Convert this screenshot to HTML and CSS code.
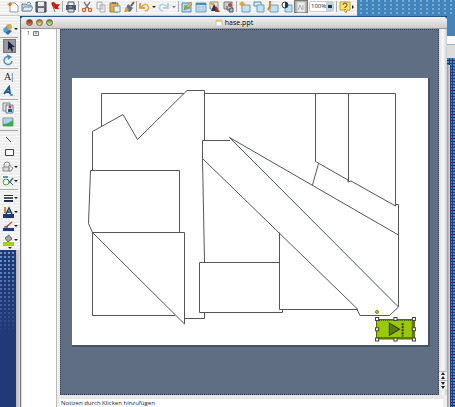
FILE: index.html
```
<!DOCTYPE html>
<html lang="de">
<head>
<meta charset="utf-8">
<title>hase.ppt</title>
<link rel="stylesheet" href="styles.css">
</head>
<body>
<header class="top">
  <div class="toolbar" role="toolbar" aria-label="Standard">
    <button class="tool" aria-label="Neu"><svg viewBox="0 0 12 12"><path d="M3 2h5l3 3v6H3z" fill="#fff" stroke="#9a9a9a"/><path d="M0 3l5-1-1 3-2 0z" fill="#f09a20"/><circle cx="3" cy="3" r="1.5" fill="#d87812"/></svg></button>
    <button class="tool" aria-label="Öffnen"><svg viewBox="0 0 12 12"><path d="M1 3h4l1 1h4v6H1z" fill="#b8cedb" stroke="#748894"/><path d="M3 6h9l-2 4H1z" fill="#e4f0f6" stroke="#7b929e"/><path d="M6 2q3-2 4 1" fill="none" stroke="#4586bb"/></svg></button>
    <button class="tool" aria-label="Sichern"><svg viewBox="0 0 12 12"><path d="M1 1h10v10H1z" fill="#66717b" stroke="#333c48"/><path d="M3 1h6v4H3z" fill="#e9eef2"/><path d="M3 7h6v4H3z" fill="#d9e0e8"/><path d="M2 6h8" stroke="#c24136"/></svg></button>
    <button class="tool" aria-label="Markieren"><svg viewBox="0 0 12 12"><path d="M3 3l3 8" stroke="#866"/><path d="M2 2q3-2 4 0t5 1L9 6l1 2q-3 1-5-1z" fill="#c91f18"/></svg></button>
    <span class="sep"></span>
    <button class="tool" aria-label="Drucken"><svg viewBox="0 0 12 12"><path d="M3 1h6v4H3z" fill="#e8f0f7" stroke="#555"/><path d="M1 4h10v5H1z" fill="#4d5966"/><path d="M3 8h6v3H3z" fill="#dbe9f5" stroke="#556"/><path d="M4 6h3" stroke="#72b9e8"/></svg></button>
    <span class="sep"></span>
    <button class="tool" aria-label="Ausschneiden"><svg viewBox="0 0 12 12"><path d="M3 1l5 7M9 1L4 8" stroke="#777" stroke-width="1.3"/><circle cx="3" cy="9" r="1.6" fill="none" stroke="#d0652e" stroke-width="1.3"/><circle cx="9" cy="9" r="1.6" fill="none" stroke="#d0652e" stroke-width="1.3"/></svg></button>
    <button class="tool" aria-label="Kopieren"><svg viewBox="0 0 12 12"><path d="M2 1h5v7H2zM5 4h5v7H5z" fill="#f6f6f6" stroke="#aaa"/><path d="M6 6h3M6 8h3" stroke="#ccc"/></svg></button>
    <button class="tool" aria-label="Einsetzen"><svg viewBox="0 0 12 12"><path d="M1 2h8v9H1z" fill="#e8a84a" stroke="#a97436"/><path d="M3 1h4v2H3z" fill="#777"/><path d="M5 5h6v6H5z" fill="#e9f2e4" stroke="#7b9a87"/></svg></button>
    <button class="tool" aria-label="Format übertragen"><svg viewBox="0 0 12 12"><path d="M11 1L8 5" stroke="#7e5534" stroke-width="2"/><path d="M5 3l5 4-3 4-5-2z" fill="#5b7488"/><path d="M1 11l2-5 3 2-2 3z" fill="#d9a040"/></svg></button>
    <span class="sep"></span>
    <button class="tool wide" aria-label="Widerrufen"><svg viewBox="0 0 12 12"><path d="M2 2v5h5" fill="none" stroke="#dd8b20" stroke-width="1.600"/><path d="M3 6q5-5 7-1t-3 5" fill="none" stroke="#e9a93c" stroke-width="1.600"/></svg><i class="down"></i></button>
    <button class="tool wide faint" aria-label="Wiederholen"><svg viewBox="0 0 12 12"><path d="M10 2v5H5" fill="none" stroke="#77aecb" stroke-width="1.600"/><path d="M9 6Q4 1 2 5t3 5" fill="none" stroke="#8bbcd5" stroke-width="1.600"/></svg><i class="down"></i></button>
    <span class="sep"></span>
    <button class="tool" aria-label="Diagramm"><svg viewBox="0 0 12 12"><path d="M1 2h9v9H1z" fill="#b9dcf0" stroke="#4a91b9"/><path d="M3 9l1-3 6-5 1 2-5 5z" fill="#e8bb45" stroke="#806830" stroke-width=".5"/><path d="M3 5h3M3 7h6" stroke="#459366"/></svg></button>
    <button class="tool" aria-label="Tabelle"><svg viewBox="0 0 12 12"><path d="M1 2h10v9H1z" fill="#c7e3f4" stroke="#6d9dbd"/><path d="M1 3h10" stroke="#4687b0" stroke-width="2"/><path d="M4 3v8M8 3v8M1 6h10M1 9h10" stroke="#94c3df" stroke-width=".7"/></svg></button>
    <button class="tool" aria-label="Bild"><svg viewBox="0 0 12 12"><path d="M1 1h8v7H1z" fill="#e8e0cb" stroke="#9c9071"/><path d="M5 3l4 7H2z" fill="#25354d"/><path d="M7 5l4 6H6z" fill="#b73527"/><path d="M2 3h3" stroke="#e0a52e" stroke-width="2"/></svg></button>
    <button class="tool" aria-label="Film"><svg viewBox="0 0 12 12"><path d="M1 1h8v7H1z" fill="#ccc" stroke="#777"/><circle cx="7" cy="4" r="2" fill="#b44"/><path d="M4 5v4h3M7 7h3v4H6z" fill="#aeb6bb" stroke="#4d5960"/></svg></button>
    <span class="sep"></span>
    <button class="tool" aria-label="Neue Folie"><svg viewBox="0 0 12 12"><path d="M3 4h8v7H3z" fill="#c4e2f2" stroke="#689fbf"/><path d="M0 3l3-3 3 3-3 3z" fill="#eba132"/></svg></button>
    <button class="tool" aria-label="Folienlayout"><svg viewBox="0 0 12 12"><path d="M1 1h7v4H1z" fill="#deeff8" stroke="#4c8eb5"/><path d="M4 4h7v7H4z" fill="#c4e2f2" stroke="#689fbf"/></svg></button>
    <button class="tool" aria-label="Foliendesign"><svg viewBox="0 0 12 12"><path d="M3 4h8v7H3z" fill="#c4e2f2" stroke="#689fbf"/><path d="M3 0v5L1 9" fill="none" stroke="#cf8a32" stroke-width="2"/></svg></button>
    <button class="tool" aria-label="Graustufen"><svg viewBox="0 0 12 12"><path d="M4 4h7v7H4z" fill="#c4e2f2" stroke="#689fbf"/><circle cx="4" cy="4" r="3" fill="#fff" stroke="#354259"/><path d="M4 1a3 3 0 010 6z" fill="#253552"/></svg></button>
    <button class="tool pressed" aria-label="Formatierungspalette"><svg viewBox="0 0 12 12"><path d="M2 1h8v10H2z" fill="#eee" stroke="#ccc"/><path d="M3 9l2-5 2 5M8 4v5" fill="none" stroke="#aaa"/></svg></button>
    <select class="zoom" aria-label="Zoom"><option>100%</option></select>
    <span class="sep"></span>
    <button class="tool" aria-label="Hilfe"><svg viewBox="0 0 12 12"><path d="M1 1h10v8H8l-1 3-2-3H1z" fill="#ffe173" stroke="#c69b35"/><path d="M4 4q0-2 2-2t2 2-2 2v1M6 8v1" fill="none" stroke="#554a31"/></svg></button>
    <i class="right"></i>
  </div>
</header>
<main class="desk">
  <aside class="side">
    <div class="palette" role="toolbar" aria-label="Zeichnen">
      <button class="cell" aria-label="Objekte"><svg viewBox="0 0 12 12"><path d="M1 8l4-2 5 2-4 4z" fill="#2b73ad"/><circle cx="7" cy="4" r="3" fill="#dba557"/><path d="M1 6l4-3 1 5-3 2z" fill="#519dce"/></svg><i class="down"></i></button>
      <hr>
      <button class="cell active" aria-label="Auswählen"><svg viewBox="0 0 12 12"><path d="M4 1v9l2-2 2 4 1-1-1-4h3z" fill="#17264e"/></svg></button>
      <button class="cell" aria-label="Drehen"><svg viewBox="0 0 12 12"><path d="M8 3a4 4 0 102 4" fill="none" stroke="#4b8fc0" stroke-width="1.5"/><path d="M5 0l5 3-4 3z" fill="#4b8fc0"/></svg></button>
      <hr>
      <button class="cell letter" aria-label="Textfeld">A|</button>
      <button class="cell" aria-label="WordArt"><svg viewBox="0 0 12 12"><path d="M2 9l5-7 1 7M4 7h4" fill="none" stroke="#225d94" stroke-width="2"/><path d="M8 10h3" stroke="#5ba5d8" stroke-width="2"/></svg></button>
      <hr>
      <button class="cell" aria-label="ClipArt"><svg viewBox="0 0 12 12"><path d="M1 1h7v8H1z" fill="#ddd" stroke="#888"/><path d="M4 3h7v8H4z" fill="#e7f2f5" stroke="#608090"/><circle cx="8" cy="5" r="1.5" fill="#c33"/><path d="M6 7h4v3H6z" fill="#315a84"/></svg></button>
      <button class="cell" aria-label="Bild einfügen"><svg viewBox="0 0 12 12"><path d="M1 2h10v8H1z" fill="#a8d7ee" stroke="#879a9d"/><path d="M1 8q5 0 10-4v6H1z" fill="#3fa94b"/></svg></button>
      <hr>
      <button class="cell" aria-label="Linie"><svg viewBox="0 0 12 12"><path d="M4 4l5 5" stroke="#444"/></svg></button>
      <button class="cell" aria-label="Rechteck"><svg viewBox="0 0 12 12"><path d="M3.500 2.500h8v6h-8z" fill="#fff" stroke="#444"/></svg></button>
      <button class="cell" aria-label="AutoFormen"><svg viewBox="0 0 12 12"><circle cx="5" cy="4" r="3" fill="#eee" stroke="#888"/><path d="M1 6h6v4H1z" fill="#ddd" stroke="#888"/><path d="M7 4l4 3-2 3H7z" fill="#eee" stroke="#888"/></svg><i class="down"></i></button>
      <button class="cell" aria-label="Verbindungen"><svg viewBox="0 0 12 12"><path d="M1 2h5M7 8l4-5" stroke="#38769f" stroke-width="1.500"/><circle cx="4" cy="7" r="3" fill="#e9f4e7" stroke="#56a14f"/><path d="M5 4l6 6" stroke="#555"/></svg><i class="down"></i></button>
      <hr>
      <button class="cell" aria-label="Linienart"><svg viewBox="0 0 12 12"><path d="M2 3.500h9" stroke="#333"/><path d="M2 6h9" stroke="#222" stroke-width="1.500"/><path d="M2 9h9" stroke="#1c2c50" stroke-width="2"/></svg><i class="down"></i></button>
      <button class="cell" aria-label="Schriftfarbe"><svg viewBox="0 0 12 12"><path d="M2 7V1h2v6" fill="#d2892f"/><path d="M4 8l3-6 3 6M5 6h4" fill="none" stroke="#263a68" stroke-width="1.500"/><path d="M1 8h11v4H1z" fill="#1c3a78"/></svg><i class="down"></i></button>
      <button class="cell" aria-label="Linienfarbe"><svg viewBox="0 0 12 12"><path d="M4 7l6-5" stroke="#c7542b" stroke-width="1.500"/><path d="M2 7h4" stroke="#333"/><path d="M1 8h11v3H1z" fill="#1c3a78"/></svg><i class="down"></i></button>
      <button class="cell" aria-label="Füllfarbe"><svg viewBox="0 0 12 12"><path d="M3 4l4-3 3 4-4 3z" fill="#9ca9a6" stroke="#666"/><path d="M1 8h11v4H1z" fill="#a0d408"/></svg><i class="down"></i></button>
      <i class="down more"></i>
    </div>
  </aside>
  <section class="window">
    <div class="titlebar">
      <div class="lights"><button class="light red" aria-label="Schließen"></button><button class="light amber" aria-label="Minimieren"></button><button class="light green" aria-label="Zoomen"></button></div>
      <h1 class="title"><svg class="doc" viewBox="0 0 8 8"><path d="M1 1h6v6H1z" fill="#fff" stroke="#c5c5c5"/><path d="M1 1h6v2H1z" fill="#efc977"/></svg>hase.ppt</h1>
    </div>
    <div class="panes">
      <nav class="outline"><span>1</span><svg viewBox="0 0 6 6"><path d="M.5 1.500h5v4h-5z" fill="#eee" stroke="#777"/><path d="M2 3h2" stroke="#468"/></svg></nav>
      <div class="editor">
        <div class="stage">
          <div class="workspace">
            <div class="slide">
              <svg class="drawing" viewBox="0 0 356 267" fill="none" stroke="#555" stroke-width="1">
                <path d="M29.500 50V15.500h294V128L279 103l-3 1v-2l-32.500-18.500v-68M276.500 15.500V103"/>
                <path d="M246.500 85.500L240.500 107"/>
                <path d="M324 126.500h2.500V229l-9 8.500H288l-3-6"/>
                <path d="M20.500 92.500v-39l30.500-17 14.500 25L115 12.500h17.500v50" fill="#fff"/>
                <path d="M20.500 154.500l-4-9 2-53h89v62"/>
                <path d="M158 62.500h-27.500V80.500L286 231.500h-78.500v-77M130.500 80.500l2 104M132.500 234.500v6h-20"/>
                <path d="M326.500 157L157.500 59.500"/>
                <path d="M157.500 59.500L326.500 229" stroke="#45516e"/>
                <path d="M208 184.500h-80.500v50h83v-3"/>
                <path d="M103 237.500H20.500v-83h92V246L20.500 154.500"/>
              </svg>
              <button class="action" aria-label="Weiter">
                <svg viewBox="0 0 40 24"><path d="M1.500 2.500h37v19h-37z" fill="#99c900" stroke="#556b00"/><path d="M2 20.500h36M37 3v18" stroke="#5b7b00" stroke-width="2"/><path d="M2 3.500h36" stroke="#344900" stroke-dasharray="1 1"/><path d="M14 6v12l10-6z" fill="#587c12" stroke="#333"/><path d="M27 6v13" stroke="#333" stroke-width="2" stroke-dasharray="2 1"/><g fill="#fff" stroke="#444"><path d="M.5 .5h3v3h-3zM18.500 .5h3v3h-3zM36.500 .5h3v3h-3zM.5 10.500h3v3h-3zM36.500 10.500h3v3h-3zM.5 20.500h3v3h-3zM18.500 20.500h3v3h-3zM36.500 20.500h3v3h-3z"/></g></svg>
              </button>
              <span class="pin"></span>
            </div>
          </div>
          <div class="scroll">
            <button class="step" aria-label="Vorherige Folie"><svg viewBox="0 0 6 8"><path d="M3 0l2 3H1zM3 4l2 3H1z" fill="#222"/></svg></button>
            <button class="step" aria-label="Nächste Folie"><svg viewBox="0 0 6 8"><path d="M3 4L1 1h4zM3 8L1 5h4z" fill="#222"/></svg></button>
          </div>
        </div>
        <div class="notes">Notizen durch Klicken hinzufügen</div>
      </div>
    </div>
  </section>
  <div class="behind"><div class="behind-bar"></div><div class="behind-window"></div></div>
</main>
</body>
</html>
```
FILE: styles.css
```
* { box-sizing: border-box; }

body {
  margin: 0;
  height: 100vh;
  overflow: hidden;
  display: flex;
  flex-direction: column;
  font-family: "Open Sans", "Liberation Sans", sans-serif;
  color: #222;
  background: #203a78;
}

button {
  padding: 0;
  border: 0;
  background: none;
}

svg { display: block; }

.top {
  flex: 0 0 15px;
  display: flex;
  background: radial-gradient(circle at 1px 1px, #78acd4 1px, transparent 1px) 0 0 / 6px 4px, #4285bd;
}

.toolbar {
  display: flex;
  align-items: center;
  padding: 0 3px 2px 6px;
  background: repeating-linear-gradient(#fafafa 0 1px, #efefef 1px 3px);
  border-bottom: 1px solid #c9c9c9;
}

.tool {
  display: flex;
  align-items: center;
  justify-content: center;
  width: 14px;
  height: 13px;
}

.tool svg { width: 12px; height: 12px; flex: none; }
.tool.wide { width: 20px; justify-content: flex-start; gap: 2px; }
.tool.faint { opacity: .6; }
.tool.pressed { background: #aaa; border: 1px solid #777; }

.sep {
  width: 1px;
  height: 11px;
  margin-right: 1px;
  background: #aaa;
}

.down, .right {
  flex: none;
  border: 2px solid transparent;
}

.down { border-top-color: #222; border-bottom: 0; }
.right { border-left-color: #222; border-right: 0; }

.zoom {
  width: 25px;
  height: 11px;
  margin: 0 2px 0 1px;
  padding: 0 0 0 1px;
  appearance: none;
  border: 1px solid #ccc;
  border-radius: 2px;
  background: linear-gradient(#234, #234) 18px 3px / 4px 3px no-repeat, linear-gradient(90deg, #fff 16px, #c3d3e6 16px);
  font: 6px/9px "Open Sans", sans-serif;
  color: #222;
}

.desk {
  flex: 1;
  min-height: 0;
  display: grid;
  grid-template-columns: 20px minmax(0, 1fr) 8px;
}

.side {
  background:
    linear-gradient(90deg, #bbb, #ddd) right / 4px 100% no-repeat,
    linear-gradient(transparent 240px, #203a78 320px),
    radial-gradient(circle at 1px 1px, #6d95c7 1px, transparent 1px) 0 0 / 4px 4px,
    #203a78;
}

.palette {
  display: flex;
  flex-direction: column;
  padding-top: 6px;
  background: repeating-linear-gradient(#f8f8f8 0 1px, #eee 1px 3px);
}

.palette hr {
  width: 18px;
  height: 1px;
  margin: 1px 0;
  border: 0;
  background: #aaa;
}

.cell {
  display: flex;
  align-items: center;
  width: 18px;
  height: 14px;
  padding-left: 2px;
}

.cell svg { width: 12px; height: 12px; flex: none; }

.cell.active {
  width: 13px;
  margin-left: 3px;
  padding: 0;
  background: #999;
  border: 1px solid #777;
}

.cell.letter {
  padding-left: 4px;
  font: 10px/14px "Liberation Serif", serif;
  color: #222;
}

.more { align-self: center; margin-bottom: 1px; }

.window {
  display: flex;
  flex-direction: column;
  min-height: 0;
  border-top: 1px solid #24588f;
  border-left: 1px solid #777;
  border-radius: 4px 4px 0 0;
  background: #eee;
}

.titlebar {
  flex: 0 0 12px;
  display: grid;
  grid-template-columns: 1fr auto 1fr;
  align-items: center;
  border-radius: 4px 4px 0 0;
  background: linear-gradient(#f3f3f3, #ccc);
  border-bottom: 1px solid #999;
}

.lights { display: flex; gap: 3px; padding-left: 5px; }
.light { width: 7px; height: 7px; border: 1px solid #665; border-radius: 50%; }
.red { background: linear-gradient(#922, #f96b52); }
.amber { background: linear-gradient(#b76b26, #ffe07b); }
.green { background: linear-gradient(#5a8b3d, #c9f68e); }

.title {
  display: flex;
  align-items: center;
  gap: 2px;
  margin: 0;
  font: 400 7px/11px "Open Sans", sans-serif;
  color: #000;
}

.doc { width: 8px; height: 8px; }

.panes {
  flex: 1;
  min-height: 0;
  display: grid;
  grid-template-columns: 36px minmax(0, 1fr);
}

.outline {
  display: flex;
  gap: 3px;
  padding: 1px 0 0 5px;
  background: #fff;
  border-left: 1px solid #ddd;
  border-right: 1px solid #bbb;
  font-size: 5px;
  line-height: 7px;
}

.outline svg { width: 6px; height: 6px; }

.editor {
  display: flex;
  flex-direction: column;
  min-width: 0;
  min-height: 0;
  padding-left: 3px;
}

.stage {
  flex: 1;
  min-height: 0;
  display: flex;
}

.workspace {
  flex: 1;
  min-width: 0;
  padding: 48px 10px 0 11px;
  background: #5f6e82;
  border: 1px dotted #36435c;
}

.slide {
  position: relative;
  background: #fff;
  box-shadow: 1px 1px 0 1px #465360;
}

.drawing { width: 100%; }

.action {
  position: absolute;
  left: 85%;
  top: 89.5%;
  width: 11.5%;
}

.action svg { overflow: visible; }

.pin {
  position: absolute;
  left: 85%;
  top: 87%;
  width: 4px;
  height: 4px;
  border: 1px solid #997a20;
  border-radius: 50%;
  background: #a5d522;
}

.scroll {
  flex: 0 0 8px;
  display: flex;
  flex-direction: column;
  justify-content: flex-end;
  padding-bottom: 6px;
  background: linear-gradient(90deg, #ddd, #fafafa 50%, #ccc);
}

.step { border-top: 1px solid #bbb; background: #eee; }
.step svg { width: 6px; height: 8px; margin: 0 auto; }

.notes {
  flex: 0 0 12px;
  margin-right: 4px;
  padding-left: 1px;
  border-top: 4px solid #e8e8e8;
  background: #fff;
  font-size: 6px;
  line-height: 8px;
}

.behind {
  display: flex;
  flex-direction: column;
  padding-top: 20px;
  background:
    linear-gradient(#4285bd, #4285bd) 0 0 / 100% 20px no-repeat,
    radial-gradient(circle at 1px 1px, #4b84b8 1px, transparent 1px) 0 0 / 3px 3px,
    #203a78;
}

.behind-bar {
  height: 22px;
  background: linear-gradient(#fafafa 8px, #aaa 8px 9px, #ddd 9px);
}

.behind-window {
  flex: 1;
  width: 4px;
  margin-top: 7px;
  background: linear-gradient(90deg, #999, #ddd);
  border-right: 1px solid #203a78;
}
```
